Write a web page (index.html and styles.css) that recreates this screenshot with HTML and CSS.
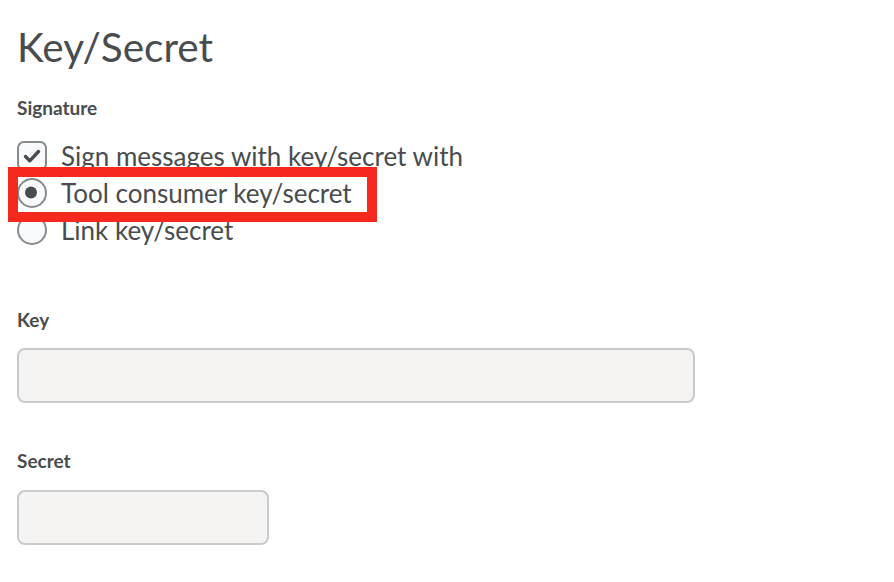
FILE: index.html
```html
<!DOCTYPE html>
<html lang="en">
<head>
    <meta charset="UTF-8">
    <title>Key/Secret</title>
    <meta name="viewport" content="width=device-width, initial-scale=1.0">
    <link rel="stylesheet" href="styles.css">
</head>
<body>
    <div class="page">
        <h1>Key/Secret</h1>
        <div class="field-label">Signature</div>

        <div class="options">
            <div class="option">
                <span class="box checked">
                    <svg width="30" height="30" viewBox="0 0 30 30">
                        <rect x="1" y="1" width="28" height="28" rx="6" fill="#f9fafc" stroke="#868b8e" stroke-width="2"/>
                        <polyline points="8.5,15.5 12.8,19.8 21.5,10.5" fill="none" stroke="#494c4e" stroke-width="3.4" stroke-linecap="round" stroke-linejoin="round"/>
                    </svg>
                </span>
                <span class="option-text">Sign messages with key/secret with</span>
            </div>
            <div class="option highlighted">
                <span class="box">
                    <svg width="30" height="30" viewBox="0 0 30 30">
                        <circle cx="15" cy="15" r="14" fill="#f9fafc" stroke="#868b8e" stroke-width="2"/>
                        <circle cx="14" cy="14.5" r="6" fill="#494c4e"/>
                    </svg>
                </span>
                <span class="option-text">Tool consumer key/secret</span>
                <span class="marker"></span>
            </div>
            <div class="option">
                <span class="box">
                    <svg width="30" height="30" viewBox="0 0 30 30">
                        <circle cx="15" cy="15" r="14" fill="#f9fafc" stroke="#868b8e" stroke-width="2"/>
                    </svg>
                </span>
                <span class="option-text">Link key/secret</span>
            </div>
        </div>

        <label class="field-label key-label" for="key">Key</label>
        <input type="text" id="key" class="text-input wide">

        <label class="field-label secret-label" for="secret">Secret</label>
        <input type="text" id="secret" class="text-input narrow">
    </div>
</body>
</html>
```

FILE: styles.css
```css
body {
    margin: 0;
    background-color: #fff;
    color: #494c4e;
    font-family: Lato, "Open Sans", sans-serif;
}
.page {
    padding: 21px 17px 0 17px;
}
h1 {
    margin: 0;
    font-size: 40.5px;
    font-weight: 400;
    line-height: 51px;
}
.field-label {
    display: block;
    margin-top: 24px;
    font-size: 19px;
    font-weight: 700;
    line-height: 23px;
}
.options {
    display: flex;
    flex-direction: column;
    gap: 7px;
    margin-top: 22px;
}
.option {
    display: flex;
    align-items: center;
    gap: 14px;
    height: 30px;
    font-size: 26px;
}
.box {
    display: flex;
    width: 30px;
    height: 30px;
    flex: none;
}
.option-text {
    line-height: 30px;
}
.highlighted {
    position: relative;
}
/* red annotation frame drawn over the second option */
.marker {
    position: absolute;
    left: -9px;
    top: -11px;
    width: 369px;
    height: 55px;
    border: 10px solid #f5291e;
    box-sizing: border-box;
}
.key-label {
    margin-top: 63px;
}
.secret-label {
    margin-top: 46px;
}
.text-input {
    display: block;
    margin-top: 17px;
    height: 55px;
    border: 2px solid #c8cacc;
    border-radius: 8px;
    background-color: #f5f4f2;
    box-sizing: border-box;
    font-family: inherit;
    font-size: 19px;
    padding: 0 12px;
}
.wide {
    width: 678px;
}
.narrow {
    width: 252px;
    margin-top: 18px;
}
```
